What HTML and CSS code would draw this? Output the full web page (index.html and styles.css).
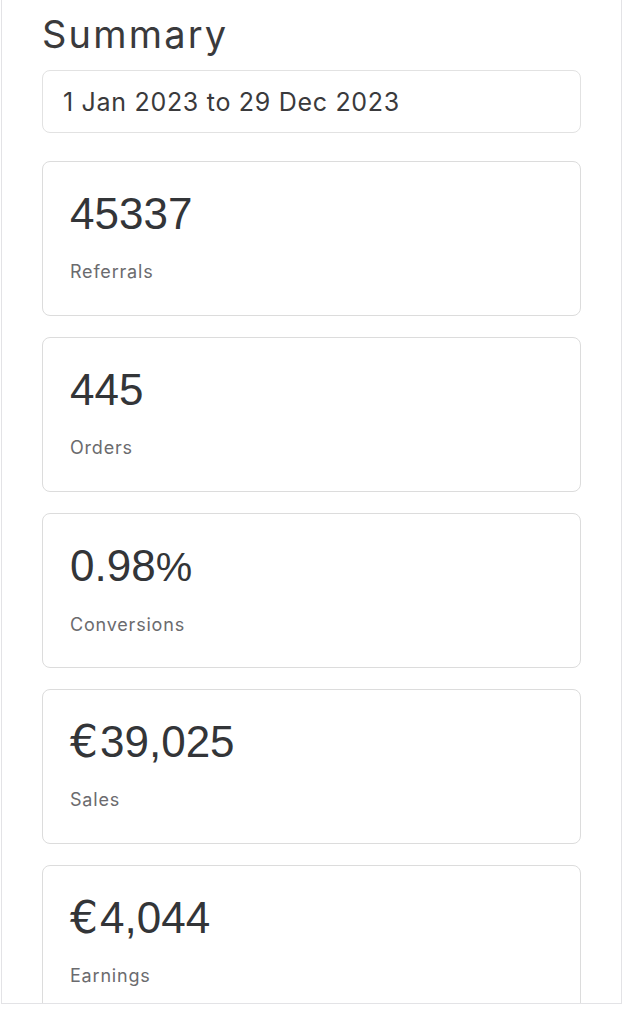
FILE: index.html
```html
<!DOCTYPE html>
<html>
<head>
<meta charset="utf-8">
<link rel="stylesheet" href="styles.css">
</head>
<body>
<div class="panel">
  <h1 class="title">Summary</h1>
  <div class="range">1 Jan 2023 to 29 Dec 2023</div>
  <div class="cards">
    <div class="card"><div class="value">45337</div><div class="label">Referrals</div></div>
    <div class="card"><div class="value">445</div><div class="label">Orders</div></div>
    <div class="card"><div class="value">0.98<span class="pct">%</span></div><div class="label">Conversions</div></div>
    <div class="card"><div class="value"><span class="eur">€</span>39,025</div><div class="label">Sales</div></div>
    <div class="card"><div class="value"><span class="eur">€</span>4,044</div><div class="label">Earnings</div></div>
  </div>
</div>
</body>
</html>
```
FILE: styles.css
```css
html, body {
  margin: 0;
  padding: 0;
  background: #ffffff;
}
.panel {
  margin-left: 1px;
  width: 621px;
  height: 1004px;
  box-sizing: border-box;
  border: 1px solid #e3e3e6;
  border-top: none;
  overflow: hidden;
  padding: 0 40px;
  font-family: "Inter", "Noto Sans", sans-serif;
  color: #3a3a3c;
}
.title {
  margin: 0;
  padding-top: 10px;
  font-size: 38px;
  font-weight: 400;
  line-height: 48px;
  letter-spacing: 2.2px;
  color: #3a3a3c;
}
.range {
  margin-top: 12px;
  height: 63px;
  box-sizing: border-box;
  border: 1px solid #e2e2e2;
  border-radius: 8px;
  padding: 0 20px;
  display: flex;
  align-items: center;
  font-size: 25px;
  letter-spacing: 0.7px;
  color: #3a3a3c;
}
.cards {
  margin-top: 28px;
  display: flex;
  flex-direction: column;
  gap: 21px;
}
.card {
  height: 155px;
  flex-shrink: 0;
  box-sizing: border-box;
  border: 1px solid #dcdcdc;
  border-radius: 8px;
  padding: 30px 27px 0;
}
.value {
  font-family: "Liberation Sans", Arial, sans-serif;
  font-size: 44px;
  line-height: 44px;
  color: #333538;
}
.eur {
  font-family: "DejaVu Sans", sans-serif;
  letter-spacing: 2px;
}
.pct {
  letter-spacing: -3px;
  font-size: 41px;
}
.label {
  margin-top: 24px;
  font-size: 18px;
  line-height: 24px;
  letter-spacing: 0.8px;
  color: #6b6b6e;
}
```
